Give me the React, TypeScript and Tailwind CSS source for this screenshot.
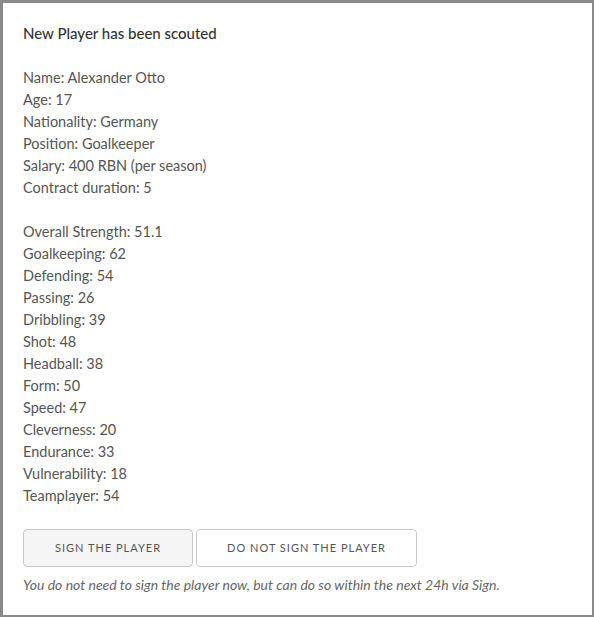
import React from "react"

const profile = [
    "Name: Alexander Otto",
    "Age: 17",
    "Nationality: Germany",
    "Position: Goalkeeper",
    "Salary: 400 RBN (per season)",
    "Contract duration: 5",
]

const stats = [
    "Overall Strength: 51.1",
    "Goalkeeping: 62",
    "Defending: 54",
    "Passing: 26",
    "Dribbling: 39",
    "Shot: 48",
    "Headball: 38",
    "Form: 50",
    "Speed: 47",
    "Cleverness: 20",
    "Endurance: 33",
    "Vulnerability: 18",
    "Teamplayer: 54",
]

export default function App() {
    return (
        <div className="w-[594px] h-[617px] bg-[#8a8a8a] pt-[3px] pl-[3px] pr-[2px] pb-[2px] font-['Lato',sans-serif]">
            <div className="h-full bg-white pl-[20px] pt-[20px]">
                {/* 제목 */}
                <h2 className="text-[15px] leading-[20px] font-medium text-[#333]">New Player has been scouted</h2>

                {/* 기본 정보 */}
                <div className="mt-[24px] text-[14.5px] leading-[22px] text-[#555]">
                    {profile.map((line) => (
                        <div key={line}>{line}</div>
                    ))}
                </div>

                {/* 능력치 */}
                <div className="mt-[22px] text-[14.5px] leading-[22px] text-[#555]">
                    {stats.map((line) => (
                        <div key={line}>{line}</div>
                    ))}
                </div>

                {/* 버튼 */}
                <div className="mt-[22px] flex gap-[3px]">
                    <button className="w-[170px] h-[38px] bg-[#f5f5f5] border border-[#c8c8c8] rounded-[4px] text-[11px] tracking-[1px] text-[#555] uppercase">
                        Sign the player
                    </button>
                    <button className="w-[221px] h-[38px] bg-white border border-[#c8c8c8] rounded-[4px] text-[11px] tracking-[1px] text-[#555] uppercase">
                        Do not sign the player
                    </button>
                </div>
                <p className="mt-[8px] text-[14px] leading-[20px] italic text-[#666]">
                    You do not need to sign the player now, but can do so within the next 24h via Sign.
                </p>
            </div>
        </div>
    )
}
